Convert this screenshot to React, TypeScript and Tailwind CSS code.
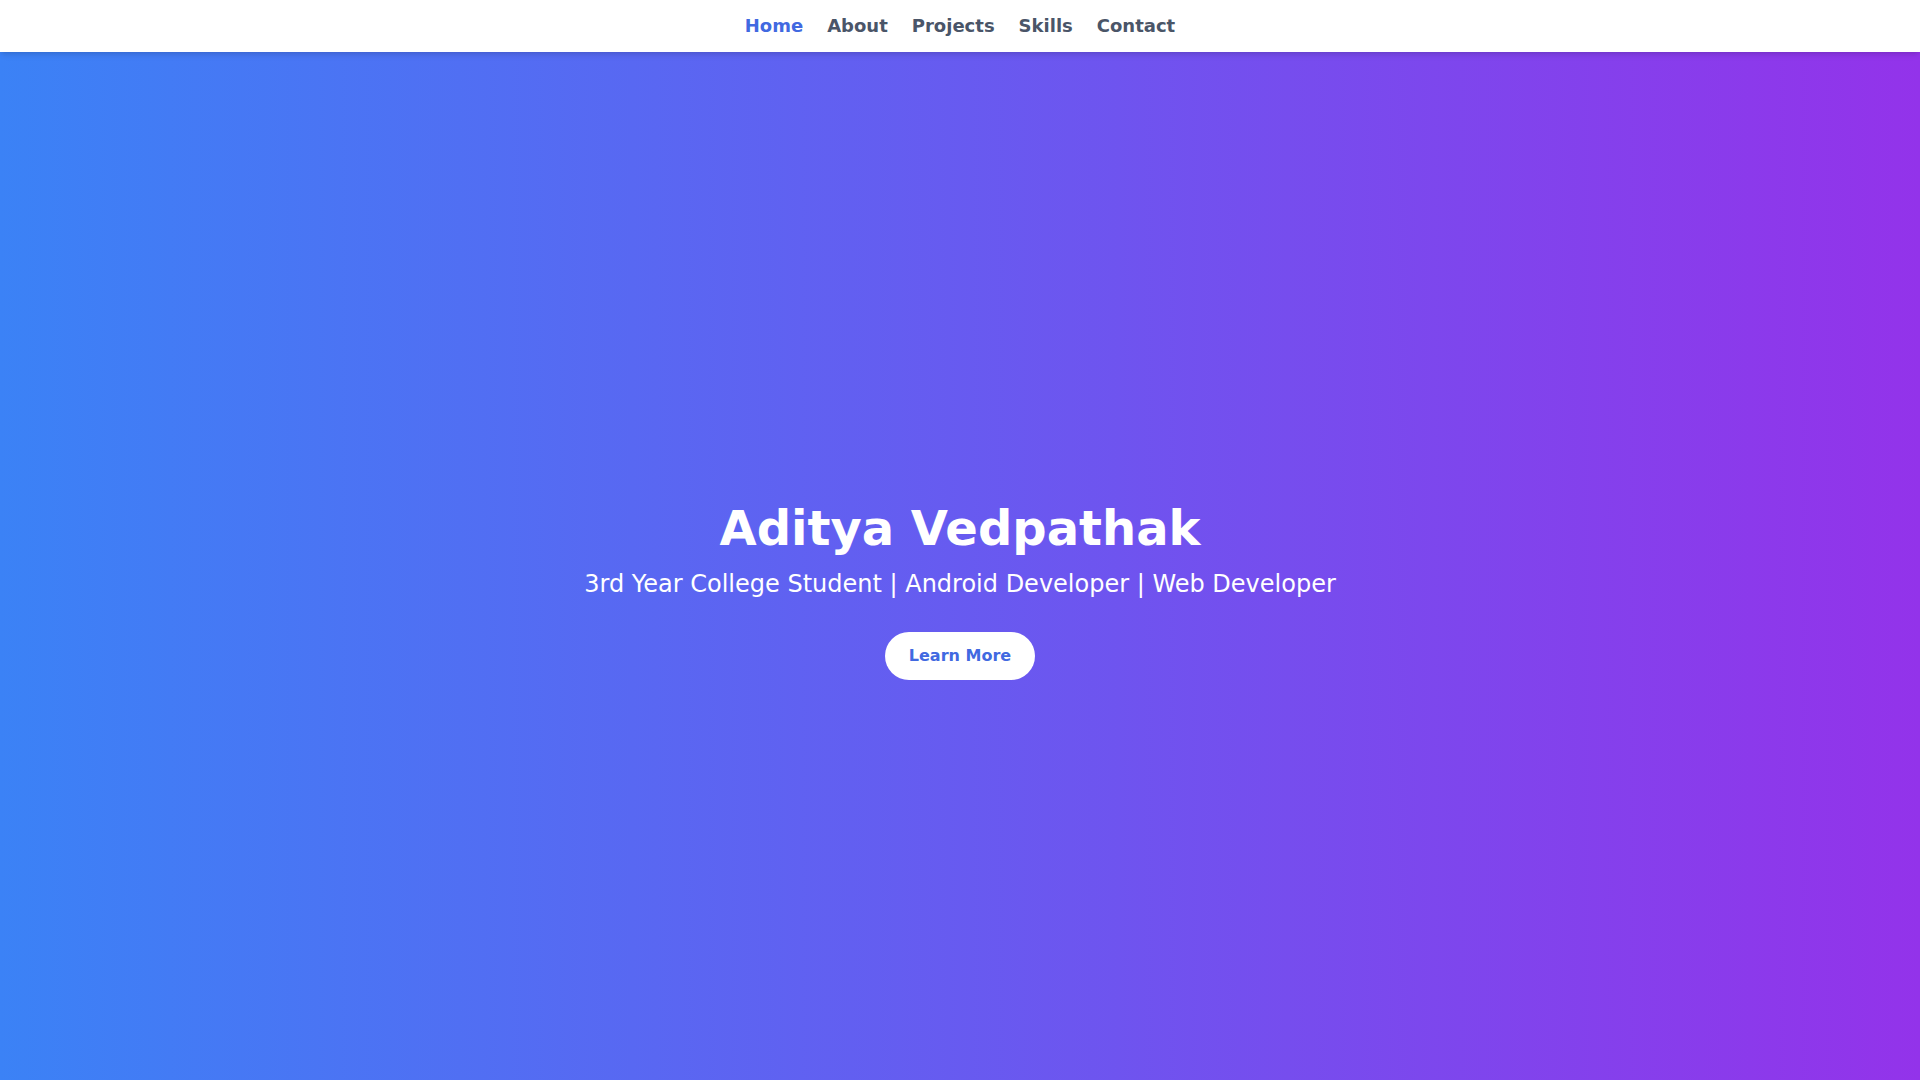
import React from 'react';

const links = ['Home', 'About', 'Projects', 'Skills', 'Contact'];

export default function App() {
  return (
    <div className="min-h-screen font-['DejaVu_Sans',sans-serif]">
      <nav className="relative z-10 bg-white shadow-md">
        <ul className="flex justify-center gap-6 py-3">
          {links.map((link, idx) => (
            <li key={link}>
              <a
                href={`#${link.toLowerCase()}`}
                className={`text-lg font-bold ${idx === 0 ? 'text-[#4169e1]' : 'text-[#4a5568]'}`}
              >
                {link}
              </a>
            </li>
          ))}
        </ul>
      </nav>

      <section className="h-screen flex flex-col items-center justify-center text-center text-white bg-linear-to-r/srgb from-[#3b82f6] to-[#9333ea]">
        <h1 className="text-5xl leading-none font-bold mb-4">Aditya Vedpathak</h1>
        <p className="text-2xl mb-8">3rd Year College Student | Android Developer | Web Developer</p>
        <button className="bg-white text-[#4169e1] font-bold text-base px-6 py-3 rounded-full">
          Learn More
        </button>
      </section>
    </div>
  );
}
